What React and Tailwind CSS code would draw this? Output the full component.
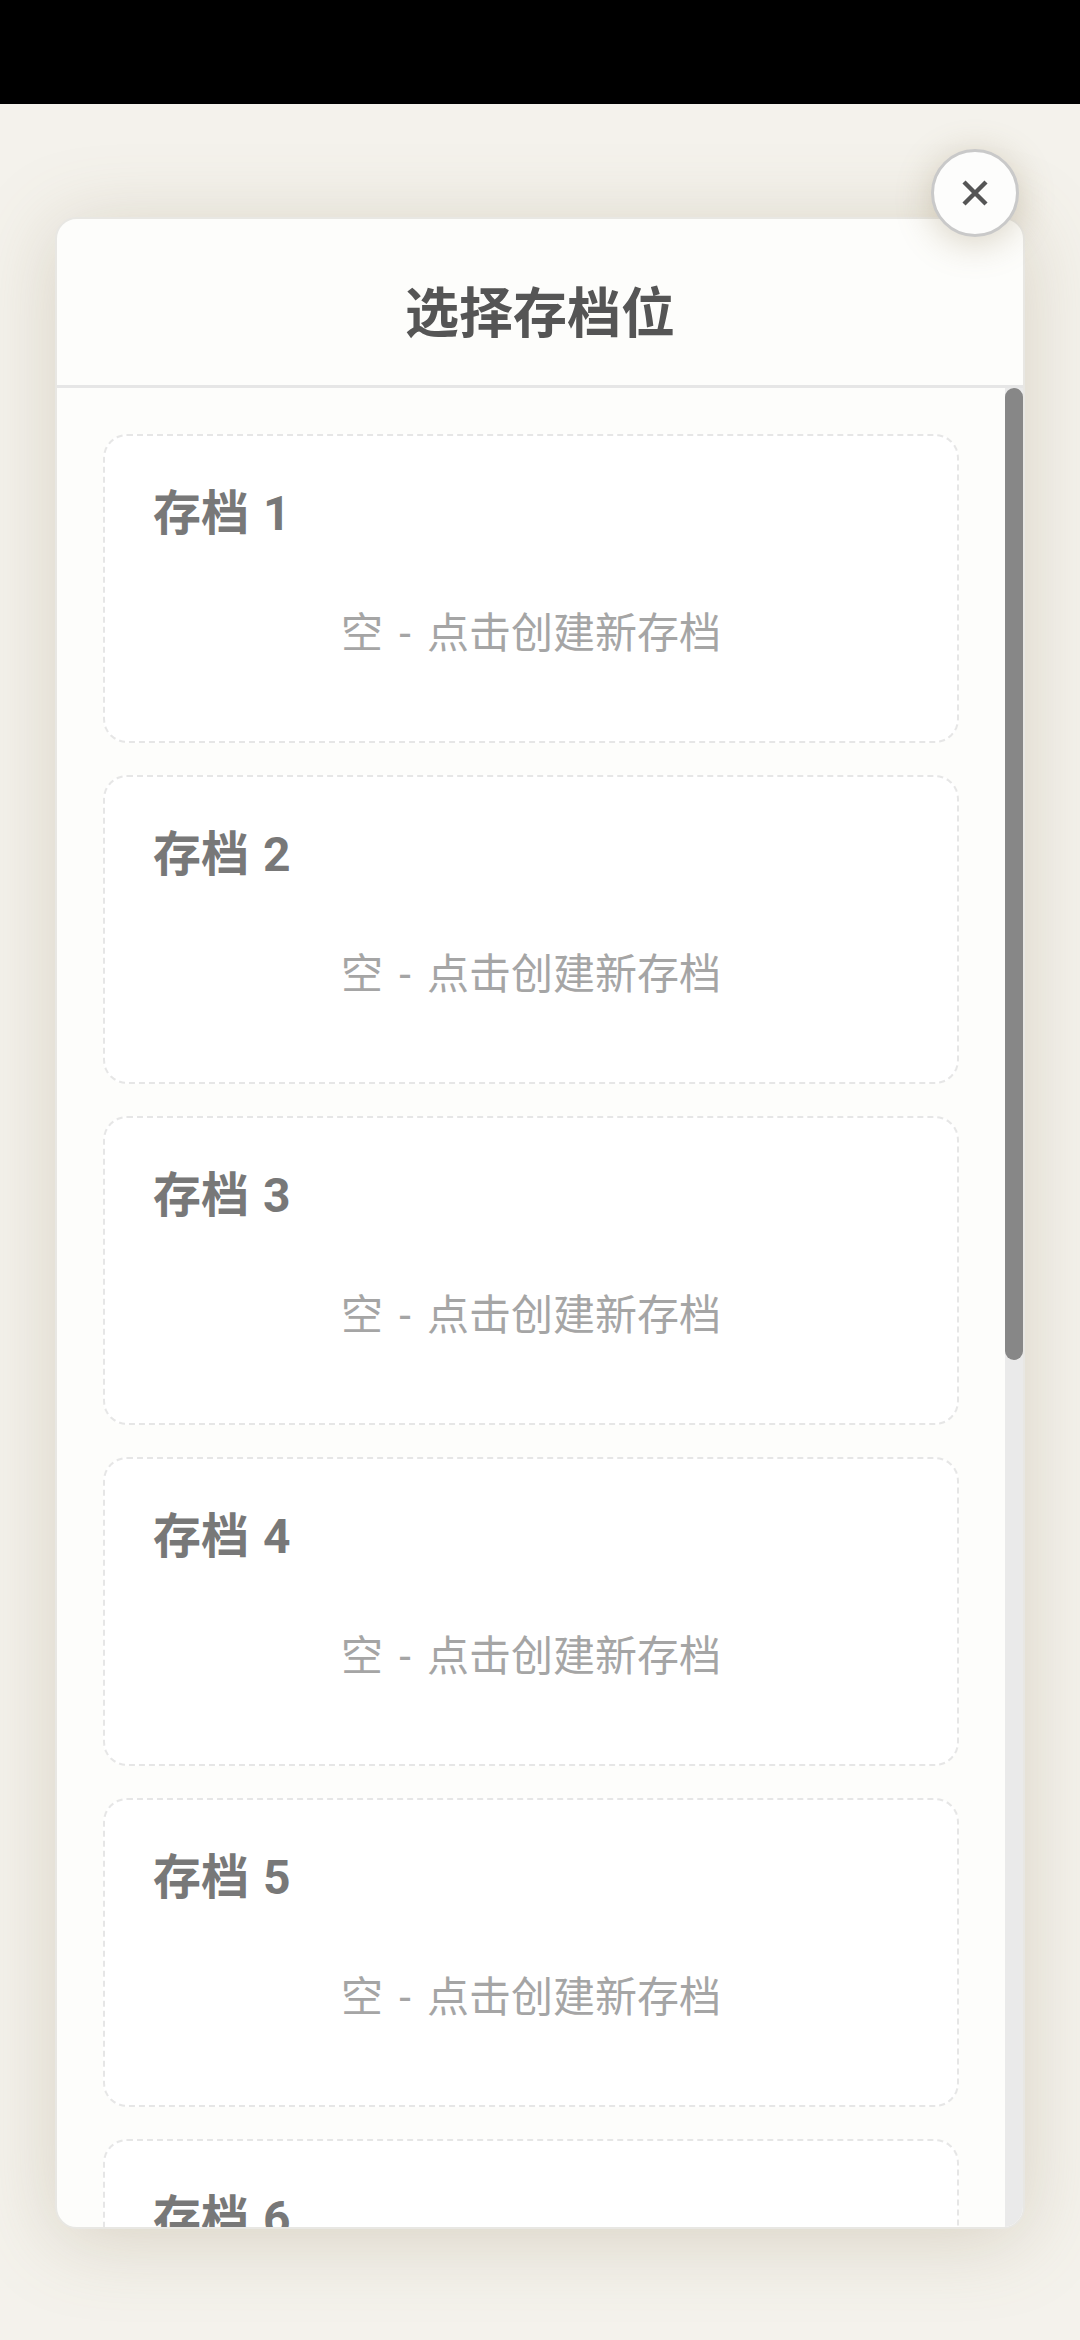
import React from "react";

const FONT = { fontFamily: 'Roboto, "Noto Sans CJK SC", sans-serif' };

function SlotCard({ n }) {
  return (
    <div className="shrink-0 rounded-[24px] border-2 border-dashed border-[#e6e6e6] bg-white pl-[48px] pr-[48px] pt-[42px] pb-[76px]">
      <div className="text-[48px] font-bold leading-[72px] text-[#787878]">
        存档<span className="ml-[14px]">{n}</span>
      </div>
      <div className="mt-[52px] text-center text-[42px] leading-[63px] text-[#a5a5a5]">
        空<span className="inline-block w-[44px] text-center">-</span>点击创建新存档
      </div>
    </div>
  );
}

export default function App() {
  return (
    <div className="w-[1080px] h-[2340px] overflow-hidden bg-[#f4f2ec]" style={FONT}>
      <div className="h-[104px] bg-black" />
      <div className="relative mx-[55px] mt-[113px] flex h-[2012px] flex-col rounded-[22px] border-2 border-[#e8e7e3] bg-[#fdfdfb] shadow-[0_10px_80px_rgba(140,120,80,0.26)]">
        <div className="flex h-[166px] shrink-0 items-center justify-center pt-[24px]">
          <h1 className="text-[54px] font-bold leading-[81px] text-[#555555]">选择存档位</h1>
        </div>
        <div className="h-[3px] shrink-0 bg-[#e6e6e6]" />
        <div className="flex min-h-0 flex-1 overflow-hidden rounded-b-[20px]">
          <div className="flex min-w-0 flex-1 flex-col gap-[32px] overflow-hidden px-[46px] pt-[46px]">
            {[1, 2, 3, 4, 5, 6].map((n) => (
              <SlotCard key={n} n={n} />
            ))}
          </div>
          <div className="w-[18px] shrink-0 bg-[#eaeaea]">
            <div className="h-[972px] rounded-full bg-[#878787]" />
          </div>
        </div>
        <button className="absolute right-[4px] top-[-70px] flex h-[88px] w-[88px] items-center justify-center rounded-full border-[3px] border-[#c9c9c9] bg-[#fdfdfc] shadow-[0_6px_36px_rgba(140,120,80,0.32)]">
          <svg width="28" height="28" viewBox="0 0 28 28" fill="none">
            <path d="M3 3 L25 25 M25 3 L3 25" stroke="#555555" strokeWidth="4.4" strokeLinecap="butt" />
          </svg>
        </button>
      </div>
    </div>
  );
}
